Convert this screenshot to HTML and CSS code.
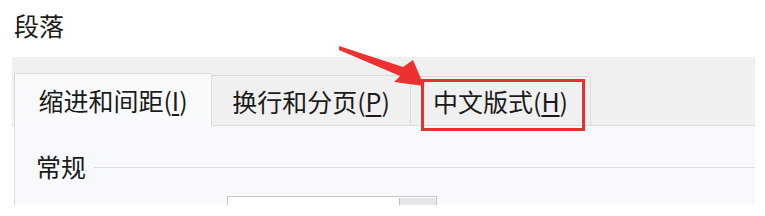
FILE: index.html
```html
<!DOCTYPE html>
<html lang="zh-CN">
<head>
  <meta charset="UTF-8">
  <title>段落</title>
  <link rel="stylesheet" href="styles.css">
</head>
<body>
  <div class="page">
    <div class="title">段落</div>

    <div class="dialog">
      <div class="tabs">
        <div class="tab active">缩进和间距(<u>I</u>)</div>
        <div class="tab second">换行和分页(<u>P</u>)</div>
        <div class="tab third">中文版式(<u>H</u>)</div>
      </div>

      <div class="panel">
        <div class="group-title">
          <span>常规</span>
          <span class="rule"></span>
        </div>
        <div class="field">
          <div class="select">
            <span class="select-btn"></span>
          </div>
        </div>
      </div>
    </div>

    <!-- annotation overlay -->
    <div class="highlight"></div>
    <svg class="arrow" width="765" height="216" viewBox="0 0 765 216">
      <polygon points="339,46 403,67 413,60 424,86 394,82 400,76 339,50" fill="#ee3030"/>
    </svg>
  </div>
</body>
</html>
```

FILE: styles.css
```css
/* Base */
body {
  margin: 0;
  background: #fff;
  font-family: "Noto Sans CJK SC", "Noto Sans", sans-serif;
  color: #1b1b1b;
}

.page {
  position: relative;
  width: 765px;
  height: 216px;
  overflow: hidden;
}

.title {
  height: 57px;
  padding-left: 14px;
  font-size: 25px;
  line-height: 50px;
}

/* Dialog */
.dialog {
  margin-left: 12px;
  width: 743px;
}

.tabs {
  display: flex;
  align-items: flex-end;
  height: 68px;
  padding-left: 2px;
  background: #f0f0f0;
  border-bottom: 1px solid #dcdcdc;
}

.tab {
  display: flex;
  align-items: center;
  justify-content: center;
  box-sizing: border-box;
  border: 1px solid #dadada;
  border-bottom: none;
  font-size: 25px;
  background: #f0f0f0;
}

.tab u {
  text-decoration-thickness: 2px;
  text-underline-offset: 3px;
}

.tab.active {
  position: relative;
  width: 197px;
  height: 53px;
  margin-bottom: -1px;
  background: #f9fafc;
  border-right: none;
}

.tab.second {
  width: 200px;
  height: 50px;
}

.tab.third {
  width: 180px;
  height: 49px;
  border-left: none;
}

.panel {
  height: 79px;
  margin-left: 2px;
  background: #f8f9fc;
  border-left: 1px solid #dadada;
  overflow: hidden;
}

.group-title {
  display: flex;
  align-items: center;
  gap: 8px;
  padding: 23px 0 0 21px;
  font-size: 25px;
  line-height: 34px;
}

.rule {
  flex: 1;
  height: 1px;
  margin-top: 2px;
  background: #dcdcdc;
}

.field {
  padding: 13px 0 0 212px;
}

.select {
  display: flex;
  justify-content: flex-end;
  width: 208px;
  height: 30px;
  background: #fff;
  border: 1px solid #c8c8c8;
}

.select-btn {
  width: 36px;
  margin-top: 1px;
  background: #e6e6e6;
  border-left: 1px solid #c0c0c0;
}

/* Annotation */
.highlight {
  position: absolute;
  left: 421px;
  top: 79px;
  width: 158px;
  height: 46px;
  border: 3px solid #e33232;
}

.arrow {
  position: absolute;
  left: 0;
  top: 0;
}
```
